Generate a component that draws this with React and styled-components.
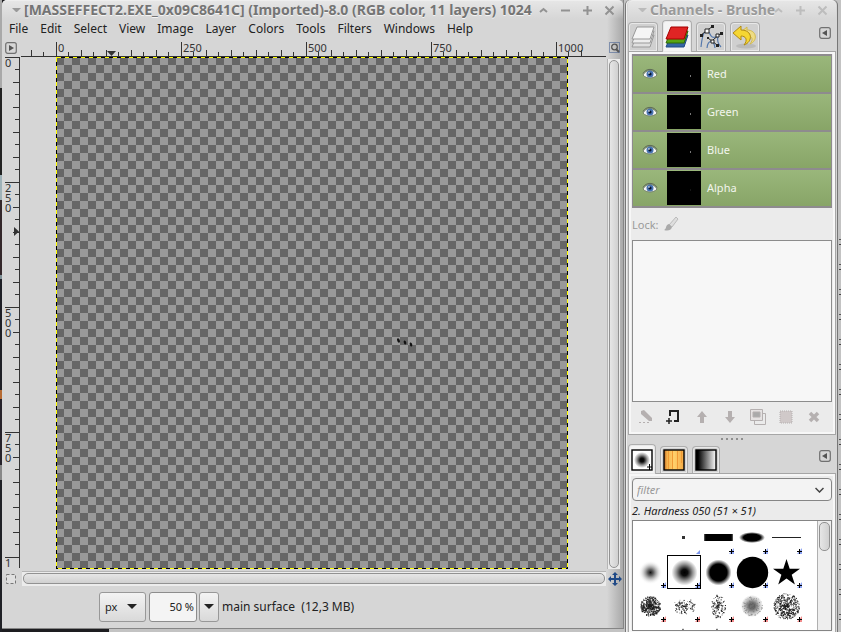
import React, { useState } from "react";
import styled, { createGlobalStyle } from "styled-components";

const GlobalStyle = createGlobalStyle`
  * {
    box-sizing: border-box;
  }

  body {
    margin: 0;
    overflow: hidden;
    background: #c0c0c0;
    color: #222;
    font-family: "Noto Sans", "Open Sans", sans-serif;
    font-size: 12px;
  }

  button, input, select {
    margin: 0;
    padding: 0;
    border: 0;
    background: none;
    color: inherit;
    font: inherit;
  }

  svg {
    display: block;
  }
`;

const Desktop = styled.div`
  display: grid;
  grid-template-columns: minmax(0, 1fr) 211px;
  gap: 2px;
  height: 100vh;
  padding: 0 4px 0 2px;
  background:
    repeating-linear-gradient(transparent 0 13px, #555 13px 14px, transparent 14px 18px, #444 18px 19px, transparent 19px 25px)
      right 226px / 2px 100% no-repeat,
    linear-gradient(#a9a9a9 0 88px, #222 88px 175px, #9fb2b8 175px 200px, #33272a 200px 275px, #7f9197 275px 279px, #1e1f26 279px 390px, #b56a33 390px 399px, #26222a 399px 465px, #888 465px 480px, #202126 480px)
      left / 2px 100% no-repeat,
    linear-gradient(90deg, #1d1d20 0 109px, #c3c3c3 109px);
`;

const ImageWindow = styled.main`
  display: flex;
  flex-direction: column;
  min-width: 0;
  margin-bottom: 3px;
  border-right: 1px solid #858585;
  border-bottom: 1px solid #858585;
  border-top-left-radius: 5px;
  background: linear-gradient(270deg, #a9a9a9, #d6d6d6 16px);
`;

const TitleBar = styled.header`
  display: flex;
  align-items: center;
  flex: none;
  height: 19px;
  padding: 0 3px 0 10px;
  border-top: 1px solid #eee;
  border-radius: 5px 5px 0 0;
  background: linear-gradient(#e6e6e6, rgba(214, 214, 214, 0));
  color: ${(props) => (props.$inactive ? "#9a9a9a" : "#747474")};
`;

const Title = styled.h1`
  flex: 1;
  min-width: 0;
  margin: 0 0 0 3px;
  font-size: 14px;
  line-height: 18px;
  font-weight: 700;
  white-space: nowrap;
  text-shadow: 0 1px 0 #f4f4f4;
`;

const WindowButton = styled.button`
  display: grid;
  place-items: center;
  width: 22px;
  height: 16px;
  color: ${(props) => (props.$inactive ? "#bdbdbd" : "#929292")};
`;

const MenuBar = styled.nav`
  display: flex;
  flex: none;
  height: 19px;
  padding-left: 1px;
`;

const MenuItem = styled.button`
  padding: 0 6px;
  line-height: 19px;
`;

const Workspace = styled.section`
  display: grid;
  flex: 1;
  grid-template-columns: 18px minmax(0, 1fr) 17px;
  grid-template-rows: 19px minmax(0, 1fr) 17px;
  min-height: 0;
`;

const CornerButton = styled.button`
  display: grid;
  place-items: center;
`;

const Ruler = styled.svg`
  width: 100%;
  height: 100%;
  overflow: hidden;
  font-size: 11px;
  fill: #333;
`;

const Viewport = styled.div`
  padding-left: 36px;
  overflow: hidden;
`;

const Scroll = styled.div`
  display: flex;
  padding: ${(props) => (props.$vertical ? "2px 3px 1px 1px" : "1px 0 1px 2px")};
`;

const Trough = styled.div`
  flex: 1;
  padding: ${(props) => (props.$vertical ? "1px 1px 1px 1px" : "1px 1px 2px")};
  border: solid #b5b5b5;
  border-width: ${(props) => (props.$vertical ? "0 0 0 1px" : "1px 0 0")};
  background: #ececec;
`;

const Thumb = styled.div`
  height: 100%;
  border: 1px solid #929292;
  border-radius: 5px;
  background: linear-gradient(
    ${(props) => (props.$vertical ? "90deg" : "180deg")},
    #e6e6e6,
    #d0d0d0
  );
`;

const StatusBar = styled.footer`
  display: flex;
  align-items: center;
  flex: none;
  height: 41px;
  padding: 0 0 2px 97px;
`;

const Picker = styled.div`
  display: grid;
  align-items: center;
  height: 30px;
  margin-right: 3px;
  border: 1px solid #989898;
  border-radius: 3px;
  background: linear-gradient(#f3f3f3, #d9d9d9);

  > * {
    grid-area: 1 / 1;
  }

  svg {
    justify-self: end;
    margin-right: 8px;
    pointer-events: none;
  }
`;

const UnitSelect = styled.select`
  width: 45px;
  height: 28px;
  padding-left: 5px;
  appearance: none;
  font-size: 11px;
`;

const ZoomInput = styled.input`
  width: 48px;
  height: 30px;
  margin-right: 2px;
  padding-right: 2px;
  border: 1px solid #8d8d8d;
  border-radius: 3px;
  background: #f4f4f4;
  font-size: 11px;
  text-align: right;
`;

const ZoomButton = styled.button`
  display: grid;
  place-items: center;
  width: 20px;
  height: 30px;
  margin-right: 3px;
  border: 1px solid #989898;
  border-radius: 3px;
  background: linear-gradient(#f3f3f3, #d9d9d9);
`;

const Dock = styled.aside`
  display: flex;
  flex-direction: column;
  height: 100vh;
  overflow: hidden;
  padding: 0 1px 0 2px;
  border-top-left-radius: 5px;
  border-top-right-radius: 5px;
  background: #d6d6d6;
  box-shadow: inset 1px 0 #f0f0f0, -1px 0 #777, 1px 0 #777;
  font-size: 11px;
`;

const TabStrip = styled.div`
  display: flex;
  align-items: flex-end;
  flex: none;
  gap: 4px;
  height: ${(props) => (props.$small ? "30px" : "32px")};
  padding: 0 5px 0 0;
`;

const Tab = styled.button`
  position: relative;
  display: grid;
  place-items: center;
  width: ${(props) => (props.$small ? "28px" : "30px")};
  height: ${(props) => (props.$active ? "100%" : "calc(100% - 3px)")};
  margin-bottom: ${(props) => (props.$active ? "-1px" : "0")};
  border: 1px solid #adadad;
  border-bottom: 0;
  border-radius: 4px 4px 0 0;
  background: ${(props) => (props.$active ? "#f4f4f4" : "#d0d0d0")};
  box-shadow: inset 0 0 0 1px #e8e8e8;
`;

const TabMenu = styled.button`
  align-self: center;
  margin-left: auto;
  padding-bottom: 4px;
`;

const Panel = styled.section`
  display: flex;
  flex-direction: column;
  flex: ${(props) => (props.$grow ? "1" : "none")};
  min-height: 0;
  padding: 2px 3px ${(props) => (props.$grow ? "2px" : "1px")};
  border: 1px solid #a6a6a6;
  border-bottom-width: ${(props) => (props.$grow ? "1px" : "0")};
  background: #ebebeb;
  box-shadow: inset 0 0 0 2px #f7f7f7;
`;

const ChannelList = styled.ul`
  flex: none;
  margin: 0;
  padding: 2px 1px 0;
  background: #8e8b8e;
  list-style: none;
`;

const ChannelRow = styled.li`
  display: flex;
  align-items: center;
  height: 36px;
  margin-bottom: 2px;
  background: linear-gradient(#9ab77b, #88a567);
  color: #f2f5ed;
`;

const ChannelName = styled.span`
  padding-bottom: 2px;
`;

const EyeButton = styled.button`
  display: grid;
  place-items: center;
  width: 34px;
  height: 34px;
`;

const ChannelThumb = styled.svg`
  width: 34px;
  height: 34px;
  margin-right: 6px;
  background: #000;
`;

const LockRow = styled.div`
  display: flex;
  align-items: center;
  flex: none;
  gap: 4px;
  height: 32px;
  color: #9a9a9a;
`;

const PathBox = styled.div`
  flex: 1;
  border: 1px solid #8c8c8c;
  background: #f7f7f7;
`;

const Actions = styled.div`
  display: flex;
  flex: none;
  height: 30px;
`;

const Action = styled.button`
  display: grid;
  place-items: center;
  width: 28px;
  color: #b5b0b0;
`;

const Grip = styled.div`
  display: flex;
  align-items: center;
  justify-content: center;
  flex: none;
  gap: 3px;
  height: 8px;

  i {
    width: 2px;
    height: 2px;
    background: #8f8f8f;
  }
`;

const FilterBox = styled.div`
  display: flex;
  align-items: center;
  height: 23px;
  margin-top: 2px;
  padding: 0 7px 0 4px;
  border: 1px solid #858585;
  border-radius: 4px;
  background: #f3f3f3;
`;

const FilterInput = styled.input`
  flex: 1;
  min-width: 0;
  outline: 0;
  font-style: italic;

  &::placeholder {
    color: #999;
    opacity: 1;
  }
`;

const BrushName = styled.p`
  margin: 0;
  height: 19px;
  line-height: 19px;
  font-style: italic;
`;

const BrushBox = styled.div`
  display: flex;
  height: 111px;
  overflow: hidden;
  border: 1px solid #858585;
  background: #fff;
`;

const BrushGrid = styled.div`
  display: grid;
  flex: 1;
  grid-template-columns: repeat(5, 34px);
  grid-auto-rows: 34px;
`;

const BrushCell = styled.button`
  border: 1px solid ${(props) => (props.$active ? "#000" : "transparent")};
`;

const BrushScroll = styled.div`
  width: 14px;
  padding: 1px;
  border-left: 1px solid #b0b0b0;
  background: #eee;

  div {
    height: 29px;
  }
`;

const Triangle = ({ size = 10, color = "#222" }) => (
  <svg width={size} height={size / 2} viewBox="0 0 10 5" fill={color}>
    <path d="M0 0h10L5 5z" />
  </svg>
);

const windowPaths = {
  Shade: "M2 7l3.500-3 3.500 3",
  Minimize: "M1 5.500h9",
  Maximize: "M1 5.500h9M5.500 1v9",
  Close: "M1.500 1.500l8 8M9.500 1.500l-8 8",
};

const WindowControls = ({ names, inactive }) =>
  names.map((name) => (
    <WindowButton key={name} aria-label={name} $inactive={inactive}>
      <svg width="11" height="11" fill="none" stroke="currentColor" strokeWidth="2">
        <path d={windowPaths[name]} />
      </svg>
    </WindowButton>
  ));

const ArrowBox = ({ flip }) => (
  <svg width="12" height="12" viewBox="0 0 12 12">
    <rect x=".7" y=".7" width="10.600" height="10.600" rx="2" fill="none" stroke="#707070" strokeWidth="1.200" />
    <path d={flip ? "M8 3v6L3 6z" : "M4 3v6l5-3z"} fill="#555" />
  </svg>
);

const tickSteps = Array.from({ length: 46 }, (_, i) => i - 3);

const tickLength = (step) => {
  if (step % 10 === 0) return 14;
  return step % 2 === 0 ? 6 : 4;
};

const HorizontalRuler = () => (
  <Ruler>
    <rect x="1" y="18" width="100%" height="1" />
    {tickSteps.map((step) => {
      const x = 36 + Math.floor(step * 12.5);
      const length = tickLength(step);
      return x > 0 && <rect key={step} x={x} y={18 - length} width="1" height={length} />;
    })}
    {[0, 250, 500, 750, 1000].map((n) => (
      <text key={n} x={38 + n / 2} y="14">
        {n}
      </text>
    ))}
    <path d="M87 13h9l-4.500 5z" />
  </Ruler>
);

const VerticalRuler = () => (
  <Ruler>
    <rect x="17" y="0" width="1" height="511" />
    {tickSteps.map((step) => {
      const y = Math.floor(step * 12.5);
      const length = tickLength(step);
      return y >= 0 && y < 510 && <rect key={step} x={17 - length} y={y} width={length} height="1" />;
    })}
    {["0", "250", "500", "750", "1"].map((label, i) =>
      label.split("").map((digit, j) => (
        <text key={`${label}${j}`} x="3" y={i * 125 + j * 10 + 10}>
          {digit}
        </text>
      ))
    )}
    <path d="M12 170v9l5-4.500z" />
  </Ruler>
);

const Canvas = () => (
  <svg width="512" height="512">
    <defs>
      <pattern id="checks" width="16" height="16" patternUnits="userSpaceOnUse">
        <path d="M0 0h16v16H0z" fill="#666" />
        <path d="M8 0h8v8H8zM0 8h8v8H0z" fill="#999" />
      </pattern>
    </defs>
    <rect width="512" height="512" fill="url(#checks)" />
    <g fill="#111">
      <ellipse cx="342.500" cy="283.500" rx="1.300" ry="2.300" transform="rotate(-20 342.500 283.500)" />
      <ellipse cx="349" cy="285.500" rx="1.200" ry="2" transform="rotate(-20 349 285.500)" />
      <ellipse cx="355" cy="287.500" rx="1.200" ry="2" transform="rotate(-20 355 287.500)" />
    </g>
    <g fill="none" shapeRendering="crispEdges">
      <rect x=".5" y=".5" width="511" height="511" stroke="#000" />
      <rect x=".5" y=".5" width="511" height="511" stroke="#ff0" strokeDasharray="4" />
    </g>
  </svg>
);

const Eye = () => (
  <svg width="16" height="12" viewBox="0 0 16 12">
    <path d="M1 7c3-6 11-6 14 0-3 4-11 4-14 0z" fill="#f7f7f7" stroke="#77846c" />
    <circle cx="8" cy="6" r="3.500" fill="#4773b2" />
    <circle cx="8" cy="6" r="1.600" fill="#07152c" />
    <circle cx="7" cy="5" r=".8" fill="#fff" />
    <path d="M1 5.500c3-5.500 11-5.500 14 0" fill="none" stroke="#5f6a59" />
  </svg>
);

const Sheets = ({ colors, stroke }) => (
  <svg width="24" height="24" viewBox="0 0 24 24" strokeLinejoin="round">
    {colors.map((fill, i) => (
      <path
        key={fill}
        d="M6 1h17l-4 12H1z"
        transform={`translate(0 ${9 - i * 4})`}
        fill={fill}
        stroke={stroke[i]}
      />
    ))}
  </svg>
);

const PathsIcon = () => (
  <svg width="24" height="24" viewBox="0 0 24 24" fill="none">
    <path d="M2 22C3 12 5 6 8 6c4 0 2 10 11 5M8 23c1-9 7-8 8 0M19 11c-1 4 0 8 3 11" stroke="#5478ad" strokeWidth="1.200" />
    <path d="M2 10l12-9M14 15l8-7M9 13l9 7" stroke="#222" />
    <path d="M6 4h4v4H6zM17 9h3v3h-3zM12 15h3v3h-3z" fill="#fff" stroke="#222" />
    <path d="M1 9h3v3H1zM12 0h3v3h-3zM21 7h3v3h-3zM8 12h2v2H8zM17 19h3v3h-3z" fill="#222" />
  </svg>
);

const UndoIcon = () => (
  <svg width="26" height="24" viewBox="0 0 26 24">
    <ellipse cx="14" cy="21" rx="10" ry="2.500" fill="#bbb" />
    <path d="M9 7l6-5v3c10 0 11 11 3 14 4-5 2-8-3-8v4z" fill="#eedc83" stroke="#d2b94f" />
    <path d="M1 8l8-7v4c12 0 12 12 3 15 4-5 2-9-3-9v4z" fill="#f5d633" stroke="#b18a10" />
  </svg>
);

const brushSpecs = [
  "empty", "dot", "block", "ellipse", "line",
  "soft", "medium", "hard", "solid", "star",
  "chalk", "sparse", "grain", "cloud", "splat",
  "sparse", "grain", "grain", "sparse", "chalk",
];

// count, horizontal radius, vertical radius, speckle size
const splatter = {
  chalk: [420, 10, 10, 1],
  sparse: [130, 11, 8, 0.9],
  grain: [160, 7, 12, 0.9],
  cloud: [160, 10, 10, 0.7],
  splat: [430, 13, 13, 1],
};

// fixed seed so the brushes keep the same grain between renders
const speckles = (kind) => {
  const [count, rx, ry, size] = splatter[kind];
  let seed = count * 7919;
  const next = () => {
    seed = (seed + 0x6d2b79f5) | 0;
    let t = Math.imul(seed ^ (seed >>> 15), 1 | seed);
    t = (t + Math.imul(t ^ (t >>> 7), 61 | t)) ^ t;
    return ((t ^ (t >>> 14)) >>> 0) / 4294967296;
  };
  return Array.from({ length: count }, () => {
    const angle = next() * Math.PI * 2;
    const reach = Math.pow(next(), 0.75);
    return [
      16 + Math.cos(angle) * reach * rx,
      16 + Math.sin(angle) * reach * ry,
      size * (0.6 + next() * 0.6),
    ];
  });
};

const BrushArt = ({ kind }) => {
  if (kind === "dot") return <path d="M14 14h3v3h-3z" fill="#333" />;
  if (kind === "block") return <path d="M2 12h29v7H2z" fill="url(#blockFade)" />;
  if (kind === "ellipse") return <ellipse cx="16" cy="15.500" rx="13" ry="5.500" fill="url(#hard)" />;
  if (kind === "line") return <path d="M2 15h29v1H2z" fill="#222" />;
  if (kind === "soft") return <circle cx="16.500" cy="16.500" r="12" fill="url(#soft)" />;
  if (kind === "medium") return <circle cx="16.500" cy="16.500" r="13" fill="url(#medium)" />;
  if (kind === "hard") return <circle cx="16.500" cy="16.500" r="13" fill="url(#hard)" />;
  if (kind === "solid") return <circle cx="16.500" cy="16.500" r="15.700" />;
  if (kind === "star") return <path d="M16.500 3l3.200 9.700H30l-8.300 6 3.200 9.800-8.400-6-8.300 6 3.200-9.800-8.400-6h10.300z" />;
  if (splatter[kind]) {
    return (
      <g fill={kind === "cloud" ? "#777" : "#1c1c1c"}>
        {kind === "cloud" && <circle cx="16" cy="16" r="11" fill="url(#medium)" opacity=".65" />}
        {speckles(kind).map(([x, y, size], i) => (
          <rect key={i} x={x} y={y} width={size} height={size} />
        ))}
      </g>
    );
  }
  return null;
};

const BrushMark = ({ index }) => {
  if (index < 1) return null;
  if (index === 1) return <path d="M32 28v4h-4z" fill="#7b96ee" />;
  return (
    <g>
      <path d="M32 26v6h-5z" fill={index > 9 ? "#f18b8b" : "#8ea5f5"} />
      <path d="M27 29h5v1h-5zM29 27h1v5h-1z" fill="#000" />
    </g>
  );
};

const HiddenDefs = styled.svg`
  position: absolute;
`;

const BrushDefs = () => (
  <HiddenDefs width="0" height="0" aria-hidden="true">
    <radialGradient id="soft">
      <stop stopColor="#111" />
      <stop offset=".25" stopColor="#444" stopOpacity=".85" />
      <stop offset=".6" stopColor="#777" stopOpacity=".35" />
      <stop offset="1" stopColor="#fff" stopOpacity="0" />
    </radialGradient>
    <radialGradient id="medium">
      <stop stopColor="#000" />
      <stop offset=".25" stopColor="#000" stopOpacity=".95" />
      <stop offset=".65" stopOpacity=".4" />
      <stop offset="1" stopOpacity="0" />
    </radialGradient>
    <radialGradient id="hard">
      <stop />
      <stop offset=".65" />
      <stop offset="1" stopOpacity="0" />
    </radialGradient>
    <linearGradient id="blockFade">
      <stop stopOpacity=".6" />
      <stop offset=".06" />
      <stop offset=".94" />
      <stop offset="1" stopOpacity=".6" />
    </linearGradient>
    <linearGradient id="wood">
      <stop stopColor="#b7601f" />
      <stop offset=".15" stopColor="#f6b34b" />
      <stop offset=".5" stopColor="#ffd16b" />
      <stop offset="1" stopColor="#f4a944" />
    </linearGradient>
    <linearGradient id="fade">
      <stop offset=".1" />
      <stop offset="1" stopColor="#fff" />
    </linearGradient>
  </HiddenDefs>
);

const Swatch = ({ fill, children }) => (
  <svg width="22" height="22">
    <rect x="1" y="1" width="20" height="20" fill={fill} stroke="#000" strokeWidth="1.400" />
    {children}
  </svg>
);

const actionIcons = {
  "Edit channel": <path d="M3 2l3-1 8 8v3h-3L3 5zM1 13h2v1H1zM5 13h2v1H5zM9 13h2v1H9z" fill="currentColor" />,
  "New channel": (
    <g fill="none" stroke="#222" strokeWidth="2">
      <path d="M4 7V2h8v10H8" />
      <path d="M0 12h6M3 9v6" strokeWidth="1.500" />
    </g>
  ),
  "Raise channel": <path d="M8 2l5 6h-3v6H6V8H3z" fill="currentColor" />,
  "Lower channel": <path d="M8 14l5-6h-3V2H6v6H3z" fill="currentColor" />,
  "Duplicate channel": (
    <g fill="none" stroke="currentColor">
      <path d="M4.500 4.500h11v11h-11z" />
      <path d="M.5.500h12v11H.500z" fill="#e5e2e2" />
      <path d="M3 3h7v5H3z" fill="#aaa" />
    </g>
  ),
  "Channel to selection": (
    <rect x="2" y="2" width="12" height="12" fill="#d0c9c9" stroke="currentColor" strokeDasharray="1 1" />
  ),
  "Delete channel": <path d="M4 4l8 8M12 4l-8 8" stroke="currentColor" strokeWidth="3.500" />,
};

const menus = ["File", "Edit", "Select", "View", "Image", "Layer", "Colors", "Tools", "Filters", "Windows", "Help"];

const ImageEditor = () => {
  const [zoom, setZoom] = useState("50 %");

  return (
    <ImageWindow>
      <TitleBar>
        <Triangle size={9} color="#999" />
        <Title>[MASSEFFECT2.EXE_0x09C8641C] (Imported)-8.0 (RGB color, 11 layers) 1024</Title>
        <WindowControls names={["Shade", "Minimize", "Maximize", "Close"]} />
      </TitleBar>
      <MenuBar>
        {menus.map((menu) => (
          <MenuItem key={menu}>{menu}</MenuItem>
        ))}
      </MenuBar>
      <Workspace>
        <CornerButton aria-label="Image menu">
          <ArrowBox />
        </CornerButton>
        <HorizontalRuler />
        <CornerButton aria-label="Zoom with window">
          <svg width="11" height="11" fill="none">
            <path d="M.5.500h10v10H.500z" stroke="#31518a" strokeDasharray="1 1" />
            <circle cx="5.500" cy="5" r="2.800" stroke="#555" strokeWidth="1.300" />
            <path d="M7 7l3 3" stroke="#555" strokeWidth="2" />
          </svg>
        </CornerButton>
        <VerticalRuler />
        <Viewport>
          <Canvas />
        </Viewport>
        <Scroll $vertical>
          <Trough $vertical>
            <Thumb $vertical />
          </Trough>
        </Scroll>
        <CornerButton aria-label="Quick mask">
          <svg width="10" height="10">
            <path d="M.5.500h9v9H.500z" fill="#e0e0e0" stroke="#777" strokeDasharray="3 2" />
          </svg>
        </CornerButton>
        <Scroll>
          <Trough>
            <Thumb />
          </Trough>
        </Scroll>
        <CornerButton aria-label="Navigate image">
          <svg width="14" height="14" viewBox="0 0 14 14" fill="#204a87">
            <path d="M7 0l3 3H8v3h3V4l3 3-3 3V8H8v3h2l-3 3-3-3h2V8H3v2L0 7l3-3v2h3V3H4z" />
          </svg>
        </CornerButton>
      </Workspace>
      <StatusBar>
        <Picker>
          <UnitSelect aria-label="Unit" defaultValue="px">
            <option>px</option>
            <option>mm</option>
          </UnitSelect>
          <Triangle />
        </Picker>
        <ZoomInput aria-label="Zoom" value={zoom} onChange={(e) => setZoom(e.target.value)} />
        <ZoomButton aria-label="Zoom levels">
          <Triangle />
        </ZoomButton>
        <span>main surface&nbsp; (12,3 MB)</span>
      </StatusBar>
    </ImageWindow>
  );
};

const ChannelsDock = () => {
  const [brush, setBrush] = useState(6);

  return (
    <Dock>
      <TitleBar $inactive>
        <Triangle size={9} color="#bbb" />
        <Title>Channels - Brushe</Title>
        <WindowControls names={["Shade", "Maximize", "Close"]} inactive />
      </TitleBar>
      <TabStrip>
        <Tab aria-label="Layers">
          <Sheets colors={["#e0e0e0", "#ededed", "#f5f5f5"]} stroke={["#999", "#999", "#999"]} />
        </Tab>
        <Tab aria-label="Channels" $active>
          <Sheets colors={["#3465a4", "#58a513", "#e02424"]} stroke={["#204a87", "#2f6b06", "#a40000"]} />
        </Tab>
        <Tab aria-label="Paths">
          <PathsIcon />
        </Tab>
        <Tab aria-label="Undo history">
          <UndoIcon />
        </Tab>
        <TabMenu aria-label="Configure channels tab">
          <ArrowBox flip />
        </TabMenu>
      </TabStrip>
      <Panel $grow>
        <ChannelList>
          {["Red", "Green", "Blue", "Alpha"].map((name) => (
            <ChannelRow key={name}>
              <EyeButton aria-label={`Show ${name}`}>
                <Eye />
              </EyeButton>
              <ChannelThumb>
                <rect x="23" y="18" width="1" height="2" fill={name === "Alpha" ? "#151515" : "#777"} />
              </ChannelThumb>
              <ChannelName>{name}</ChannelName>
            </ChannelRow>
          ))}
        </ChannelList>
        <LockRow>
          Lock:
          <svg width="16" height="16" viewBox="0 0 16 16">
            <path d="M13 1l2 2-6 8-3-2z" fill="#dedede" stroke="#bbb" />
            <path d="M6 8l3 3c-1 4-5 4-8 3 3-1 1-5 5-6z" fill="#aaa" />
          </svg>
        </LockRow>
        <PathBox />
        <Actions>
          {Object.keys(actionIcons).map((name) => (
            <Action key={name} aria-label={name}>
              <svg width="16" height="16">
                {actionIcons[name]}
              </svg>
            </Action>
          ))}
        </Actions>
      </Panel>
      <Grip>
        <i />
        <i />
        <i />
        <i />
        <i />
      </Grip>
      <TabStrip $small>
        <Tab aria-label="Brushes" $small $active>
          <Swatch fill="#fff">
            <circle cx="11" cy="11" r="8" fill="url(#medium)" />
            <path d="M16 18h5M18.500 15v6" stroke="#000" />
          </Swatch>
        </Tab>
        <Tab aria-label="Patterns" $small>
          <Swatch fill="url(#wood)">
            <path d="M5.500 2v18M9.500 2v18M14.500 2v18M18.500 2v12" stroke="#f09a35" />
          </Swatch>
        </Tab>
        <Tab aria-label="Gradients" $small>
          <Swatch fill="url(#fade)" />
        </Tab>
        <TabMenu aria-label="Configure brushes tab">
          <ArrowBox flip />
        </TabMenu>
      </TabStrip>
      <Panel>
        <FilterBox>
          <FilterInput aria-label="Filter brushes" placeholder="filter" />
          <button aria-label="Filter history">
            <svg width="9" height="6" fill="none" stroke="#444" strokeWidth="1.500">
              <path d="M.5 1l4 4 4-4" />
            </svg>
          </button>
        </FilterBox>
        <BrushName>2. Hardness 050 (51 × 51)</BrushName>
        <BrushDefs />
        <BrushBox>
          <BrushGrid>
            {brushSpecs.map((kind, i) => (
              <BrushCell key={i} aria-label={`Brush ${i + 1}`} $active={i === brush} onClick={() => setBrush(i)}>
                <svg width="32" height="32" overflow="visible">
                  <BrushArt kind={kind} />
                  <BrushMark index={i} />
                </svg>
              </BrushCell>
            ))}
          </BrushGrid>
          <BrushScroll>
            <div>
              <Thumb $vertical />
            </div>
          </BrushScroll>
        </BrushBox>
      </Panel>
    </Dock>
  );
};

const App = () => (
  <>
    <GlobalStyle />
    <Desktop>
      <ImageEditor />
      <ChannelsDock />
    </Desktop>
  </>
);

export default App;
